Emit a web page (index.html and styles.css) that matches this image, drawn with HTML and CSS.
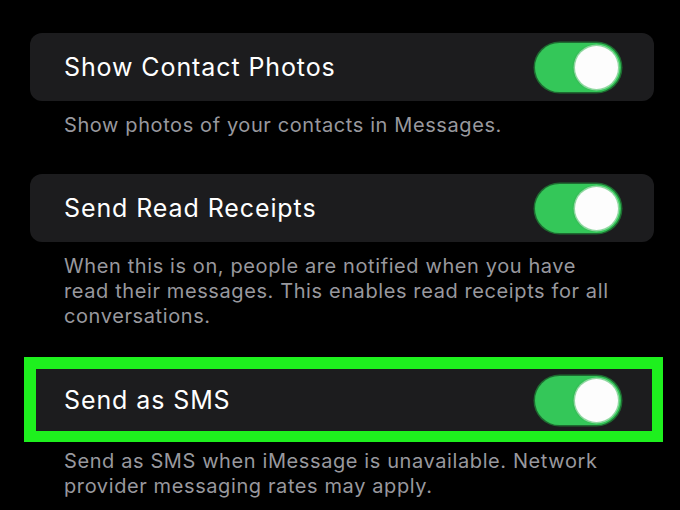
FILE: index.html
```html
<!DOCTYPE html>
<html>
<head>
<meta charset="utf-8">
<link rel="stylesheet" href="styles.css">
</head>
<body>
<div class="list">
  <div class="card">
    <span class="label">Show Contact Photos</span>
    <span class="toggle"><span class="knob"></span></span>
  </div>
  <p class="note">Show photos of your contacts in Messages.</p>

  <div class="card">
    <span class="label">Send Read Receipts</span>
    <span class="toggle"><span class="knob"></span></span>
  </div>
  <p class="note">When this is on, people are notified when you have read their messages. This enables read receipts for all conversations.</p>

  <div class="card highlight">
    <span class="label">Send as SMS</span>
    <span class="toggle"><span class="knob"></span></span>
  </div>
  <p class="note last">Send as SMS when iMessage is unavailable. Network provider messaging rates may apply.</p>
</div>
</body>
</html>
```

FILE: styles.css
```css
html, body {
  margin: 0;
  padding: 0;
  background: #000;
  height: 100%;
  overflow: hidden;
}
body {
  font-family: Inter, "Noto Sans", sans-serif;
  -webkit-font-smoothing: antialiased;
}
.list {
  width: 624px;
  margin-left: 30px;
  padding-top: 33px;
  display: flex;
  flex-direction: column;
}
.card {
  height: 68px;
  background: #1c1c1e;
  border-radius: 12px;
  display: flex;
  align-items: center;
  justify-content: space-between;
  padding: 0 33px 0 34px;
  box-sizing: border-box;
}
.label {
  color: #fff;
  font-size: 25px;
  letter-spacing: 0.9px;
}
.toggle {
  width: 86px;
  height: 49px;
  border-radius: 25px;
  background: #34c759;
  box-shadow: 0 0 0 1.5px #1e6b31;
  display: flex;
  align-items: center;
  justify-content: flex-end;
  padding-right: 3px;
  box-sizing: border-box;
}
.knob {
  width: 43px;
  height: 43px;
  border-radius: 50%;
  background: #fdfdfd;
  box-shadow: 0 0 0 1.5px #8fd8a0, -1px 0 2px rgba(0, 60, 20, 0.5);
}
.note {
  margin: 12px 0 36px;
  padding: 0 34px;
  color: #98989e;
  font-size: 20px;
  line-height: 25px;
  letter-spacing: 0.6px;
}
.note.last {
  margin-top: 7px;
}
.highlight {
  height: 85px;
  margin: -8px -9px 0 -6px;
  border-radius: 0;
  border-style: solid;
  border-color: #1ef01e;
  border-width: 12px 11px 11px 12px;
  padding: 0 31px 0 28px;
}
```
